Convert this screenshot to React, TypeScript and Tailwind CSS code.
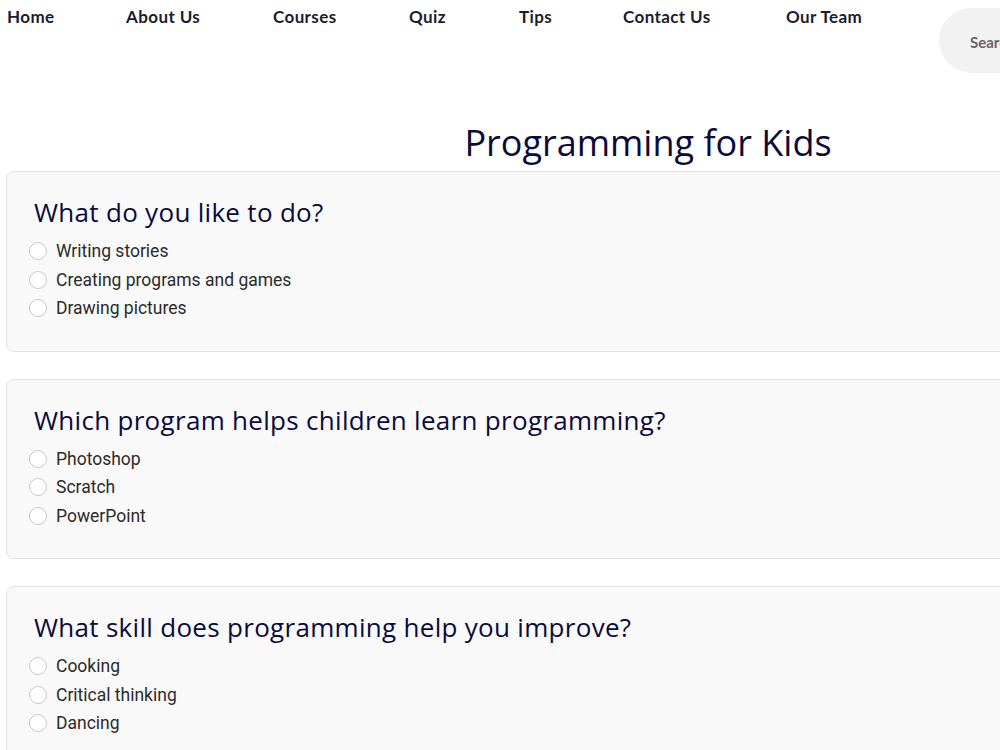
import React from 'react';

// nav items with widths so the links sit where the design puts them
const NAV = [
  { label: 'Home', w: 'w-[119px]' },
  { label: 'About Us', w: 'w-[147px]' },
  { label: 'Courses', w: 'w-[136px]' },
  { label: 'Quiz', w: 'w-[110px]' },
  { label: 'Tips', w: 'w-[104px]' },
  { label: 'Contact Us', w: 'w-[163px]' },
  { label: 'Our Team', w: 'w-[154px]' },
];

const QUESTIONS = [
  { q: 'What do you like to do?', options: ['Writing stories', 'Creating programs and games', 'Drawing pictures'] },
  { q: 'Which program helps children learn programming?', options: ['Photoshop', 'Scratch', 'PowerPoint'] },
  { q: 'What skill does programming help you improve?', options: ['Cooking', 'Critical thinking', 'Dancing'] },
];

const Question: React.FC<{ q: string; options: string[]; idx: number }> = ({ q, options, idx }) => (
  <div className="bg-[#f9f9f9] border border-[#e2e2e2] rounded-lg pl-[22px] pr-7 py-7">
    <h3 className="ml-[5px] text-[26px] leading-[25px] text-[#0b0b3b] font-['Open_Sans',sans-serif] tracking-[0.3px]">{q}</h3>
    <div className="mt-3">
      {options.map(o => (
        <label key={o} className="flex items-center h-[28.5px] gap-[9px] font-['Roboto',sans-serif] text-[17.5px] text-[#2b2b2b]">
          <input type="radio" name={`q${idx}`} className="appearance-none w-[18px] h-[18px] rounded-full border border-[#c8c8c8] bg-white" />
          <span>{o}</span>
        </label>
      ))}
    </div>
  </div>
);

export default function App() {
  return (
    <div className="w-[1296px] bg-white min-h-[750px]">
      <nav className="flex items-start px-[7px]">
        <ul className="flex pt-[6px]">
          {NAV.map(n => (
            <li key={n.label} className={`${n.w} text-[17px] leading-[22px] font-bold text-[#1c1c2e] font-['Lato',sans-serif] tracking-[0.4px]`}>{n.label}</li>
          ))}
        </ul>
        <div className="ml-[-1px] mt-2 h-[65px] w-[220px] rounded-full bg-[#f2f2f2] flex items-center pl-[31px] pt-1">
          <input placeholder="Search" className="bg-transparent outline-none text-[15px] font-bold font-['Lato',sans-serif] placeholder:text-[#666]" />
        </div>
      </nav>
      <h1 className="mt-[48px] text-center text-[36px] leading-[44px] text-[#0b0b3b] font-['Open_Sans',sans-serif]">Programming for Kids</h1>
      <div className="px-[6px] mt-[6px] flex flex-col gap-[27px]">
        {QUESTIONS.map((x, i) => <Question key={i} idx={i} q={x.q} options={x.options} />)}
      </div>
    </div>
  );
}
